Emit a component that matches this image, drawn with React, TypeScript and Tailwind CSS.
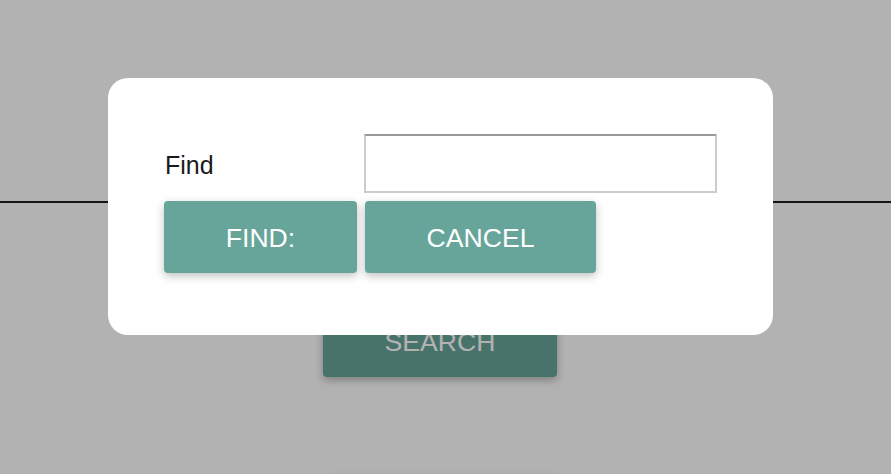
import React from "react";

export default function App() {
  const font = { fontFamily: '"Liberation Sans", Arial, sans-serif' };
  return (
    <div className="relative h-[474px] w-[891px] overflow-hidden bg-white" style={font}>
      {/* underlying page */}
      <div className="h-[201px]" />
      <div className="h-[2px] w-full bg-[#1e1e1e]" />
      <div className="h-[102px]" />
      <div className="ml-[323px] flex h-[72px] w-[234px] items-center justify-center rounded-[4px] bg-[#67a59a] pt-[3px] text-[26.6px] text-white shadow-[0_3px_8px_rgba(0,0,0,0.3)]">
        SEARCH
      </div>
      <div className="mt-[99px] ml-[330px] h-[72px] w-[226px] rounded-[4px] bg-[#67a59a] shadow-[0_3px_8px_rgba(0,0,0,0.3)]" />

      {/* overlay */}
      <div className="absolute inset-0 bg-black/30">
        <div className="absolute left-[108px] top-[78px] h-[257px] w-[665px] rounded-[20px] bg-white px-[56px] pt-[56px]">
          <div className="flex items-center">
            <label className="w-[200px] pt-[3px] pl-[1px] text-[25px] leading-none text-[#1a1a1a]">Find</label>
            <input
              type="text"
              className="h-[59px] w-[353px] border-2 border-[#cccccc] border-t-[#999999] bg-white outline-none"
            />
          </div>
          <div className="mt-[8px] flex gap-[8px]">
            <button className="flex h-[72px] w-[193px] items-center justify-center rounded-[4px] bg-[#67a59a] pt-[3px] text-[26.6px] text-white shadow-[0_3px_8px_rgba(0,0,0,0.25)]">
              FIND:
            </button>
            <button className="flex h-[72px] w-[231px] items-center justify-center rounded-[4px] bg-[#67a59a] pt-[3px] text-[26.6px] text-white shadow-[0_3px_8px_rgba(0,0,0,0.25)]">
              CANCEL
            </button>
          </div>
        </div>
      </div>
    </div>
  );
}
